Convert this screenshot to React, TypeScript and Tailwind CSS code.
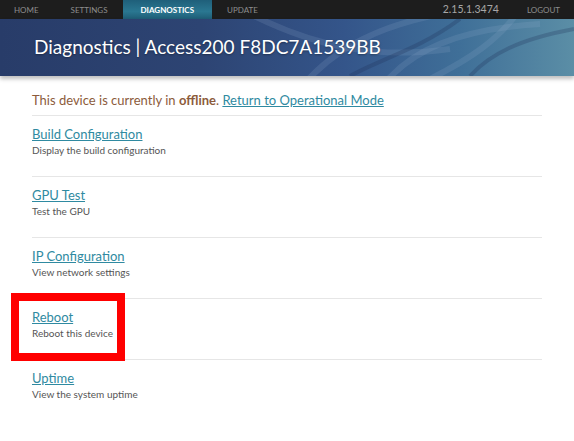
import type { ReactNode } from "react";

type Tool = {
  title: string;
  description: string;
};

const tools: Tool[] = [
  { title: "Build Configuration", description: "Display the build configuration" },
  { title: "GPU Test", description: "Test the GPU" },
  { title: "IP Configuration", description: "View network settings" },
  { title: "Reboot", description: "Reboot this device" },
  { title: "Uptime", description: "View the system uptime" },
];

const tabs = ["Home", "Settings", "Diagnostics", "Update"];

function NavTab({ label, active, first }: { label: string; active: boolean; first: boolean }) {
  return (
    <a
      href="#"
      className={`flex h-full items-center text-[8px] uppercase ${first ? "pl-[14px] pr-[17px]" : "px-[15px]"} ${
        active
          ? "bg-[linear-gradient(180deg,#1f5f7a_0%,#2a7791_60%,#1f5d76_100%)] px-[18px] font-bold text-white"
          : "text-[#8d8d8d]"
      }`}
    >
      {label}
    </a>
  );
}

function Banner({ children }: { children: ReactNode }) {
  return (
    <div className="relative h-[57px] overflow-hidden bg-[linear-gradient(90deg,#283c69_0%,#2d4473_35%,#34558a_60%,#3f6f98_80%,#5b8ea6_100%)] shadow-[0_3px_4px_rgba(0,0,0,0.25)]">
      {/* faint swirl texture across the header */}
      <svg
        className="pointer-events-none absolute inset-0 h-full w-full"
        viewBox="0 0 574 57"
        preserveAspectRatio="none"
      >
        <g fill="none" stroke="#9ab6d6" strokeOpacity="0.16" strokeWidth="6">
          <path d="M300 70 C 340 20, 400 0, 470 -10" />
          <path d="M380 70 C 410 30, 460 10, 540 5" />
          <path d="M430 60 C 470 40, 500 20, 520 -10" />
          <path d="M250 -5 C 320 30, 380 40, 450 30" />
        </g>
        <g fill="none" stroke="#1c2c52" strokeOpacity="0.25" strokeWidth="4">
          <path d="M470 57 C 490 35, 520 20, 574 10" />
          <path d="M350 57 C 380 40, 420 30, 460 0" />
        </g>
      </svg>
      <div className="relative flex h-full items-center pl-[34px] pb-[2px]">{children}</div>
    </div>
  );
}

export default function App() {
  return (
    <div className="min-h-[441px] w-[574px] bg-white font-['Lato','Open_Sans',sans-serif]">
      <nav className="flex h-[19px] items-stretch justify-between bg-[#1d1d1d]">
        <div className="flex h-full">
          {tabs.map((tab, i) => (
            <NavTab key={tab} label={tab} active={tab === "Diagnostics"} first={i === 0} />
          ))}
        </div>
        <div className="flex items-center gap-[28px] pr-[14px]">
          <span className="text-[10.5px] text-[#a6a6a6]">2.15.1.3474</span>
          <a href="#" className="text-[8px] uppercase text-[#8d8d8d]">
            Logout
          </a>
        </div>
      </nav>

      <Banner>
        <h1 className="text-[19px] leading-none text-white [text-shadow:0_1px_2px_rgba(0,0,0,0.35)]">
          Diagnostics | Access200 F8DC7A1539BB
        </h1>
      </Banner>

      <main className="relative px-8 pt-[14px]">
        <p className="pb-[5px] text-[13px] leading-5 text-[#8c5b3b]">
          This device is currently in <span className="font-bold">offline</span>.{" "}
          <a href="#" className="text-[#2f8aa1] underline">
            Return to Operational Mode
          </a>
        </p>

        {tools.map((tool) => (
          <div key={tool.title} className="border-t border-[#e6e6e6] pt-[9px] pb-[19px]">
            <a href="#" className="block text-[13px] leading-[18px] text-[#2f8aa1] underline">
              {tool.title}
            </a>
            <p className="text-[10px] leading-[14px] text-[#555]">{tool.description}</p>
          </div>
        ))}

        {/* highlight around the reboot entry */}
        <div className="pointer-events-none absolute left-[11px] top-[217px] h-[68px] w-[114px] border-[8px] border-[#ff0000]" />
      </main>
    </div>
  );
}
